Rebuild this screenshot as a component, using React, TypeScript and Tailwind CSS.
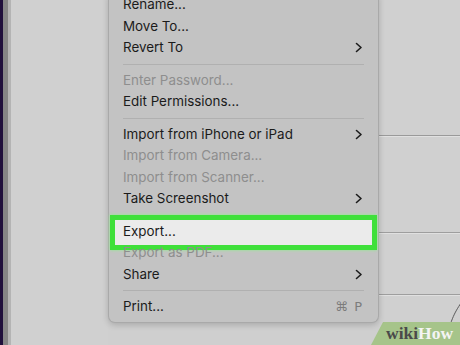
import React from "react";

const Chevron = () => (
  <svg width="8" height="11" viewBox="0 0 8 11" className="shrink-0">
    <polyline points="1.5,1.5 6,5.5 1.5,9.5" fill="none" stroke="#1c1c1c" strokeWidth="1.6" strokeLinecap="round" strokeLinejoin="round" />
  </svg>
);

type Item = { label: string; disabled?: boolean; sub?: boolean; shortcut?: string; highlight?: boolean } | "sep";

const items: Item[] = [
  { label: "Rename..." },
  { label: "Move To..." },
  { label: "Revert To", sub: true },
  "sep",
  { label: "Enter Password...", disabled: true },
  { label: "Edit Permissions..." },
  "sep",
  { label: "Import from iPhone or iPad", sub: true },
  { label: "Import from Camera...", disabled: true },
  { label: "Import from Scanner...", disabled: true },
  { label: "Take Screenshot", sub: true },
  "sep",
  { label: "Export...", highlight: true },
  { label: "Export as PDF...", disabled: true },
  { label: "Share", sub: true },
  "sep",
  { label: "Print...", shortcut: "⌘ P" },
];

export default function App() {
  return (
    <div
      className="w-[460px] h-[345px] overflow-hidden relative flex bg-[#cfcfcf]"
      style={{ fontFamily: "Inter, 'Liberation Sans', sans-serif" }}
    >
      <div className="w-[3px] bg-[#1f0f3b]" />
      <div className="w-[5px] bg-[#858585]" />
      <div className="w-[3px] bg-[#b4b4b4]" />
      <div className="w-[97px] bg-[#d0d0d0]" />
      {/* menu */}
      <div className="w-[271px] self-start -mt-[6px] bg-[#c3c3c3] border border-t-0 border-[#a9a9a9] rounded-b-[7px] shadow-[0_2px_6px_rgba(0,0,0,0.18)] pb-[4px] relative z-10">
        {items.map((it, i) =>
          it === "sep" ? (
            <div key={i} className="h-[11px] flex items-center px-[14px]">
              <div className="h-px w-full bg-[#b0b0b0]" />
            </div>
          ) : (
            <div key={i} className="h-[21.5px] relative flex items-center pl-[14px] pr-[15px]">
              {it.highlight && (
                <div className="absolute -top-[6px] -bottom-[8px] left-[1px] right-[1px] border-[5px] border-[#3fe03a] bg-[#ebebeb] shadow-[0_0_3px_#8cf08a]" />
              )}
              <span
                className={`relative text-[13.4px] leading-none flex-1 ${it.disabled ? "text-[#8e8e8e]" : "text-[#1b1b1b]"}`}
              >
                {it.label}
              </span>
              {it.sub && <Chevron />}
              {it.shortcut && (
                <span className="text-[13px] text-[#7c7c7c] tracking-[1px]" style={{ fontFamily: "'DejaVu Sans', Inter, sans-serif" }}>
                  {it.shortcut}
                </span>
              )}
            </div>
          )
        )}
      </div>
      {/* right page */}
      <div className="flex-1 flex flex-col bg-[#d0d0d0]">
        <div className="h-[135px]" />
        <div className="h-px bg-[#9a9a9a]" />
        <div className="h-px bg-[#e0e0e0]" />
        <div className="h-[95px]" />
        <div className="h-px bg-[#9e9e9e]" />
        <div className="h-px bg-[#e0e0e0]" />
        <div className="h-[60px]" />
        <div className="h-px bg-[#9e9e9e]" />
        <div className="h-px bg-[#e0e0e0]" />
      </div>
      {/* pen stroke */}
      <svg className="absolute left-0 top-0" width="460" height="345">
        <path d="M461 303 C455 312 449 322 446 345" fill="none" stroke="#5a5a5a" strokeWidth="1" />
      </svg>
      {/* wikiHow watermark */}
      <div className="absolute right-0 bottom-0 w-[89px] h-[23px]">
        <svg className="absolute inset-0" width="89" height="23">
          <polygon points="12,0 89,0 89,23 0,23" fill="#a6c48a" />
        </svg>
        <div
          className="absolute left-[15px] top-[3px] text-[17.5px] font-bold leading-none"
          style={{ fontFamily: "'Liberation Serif', 'DejaVu Serif', serif" }}
        >
          <span className="text-[#4a4a4a]">wiki</span>
          <span className="text-[#f4f4f4]">How</span>
        </div>
      </div>
    </div>
  );
}
